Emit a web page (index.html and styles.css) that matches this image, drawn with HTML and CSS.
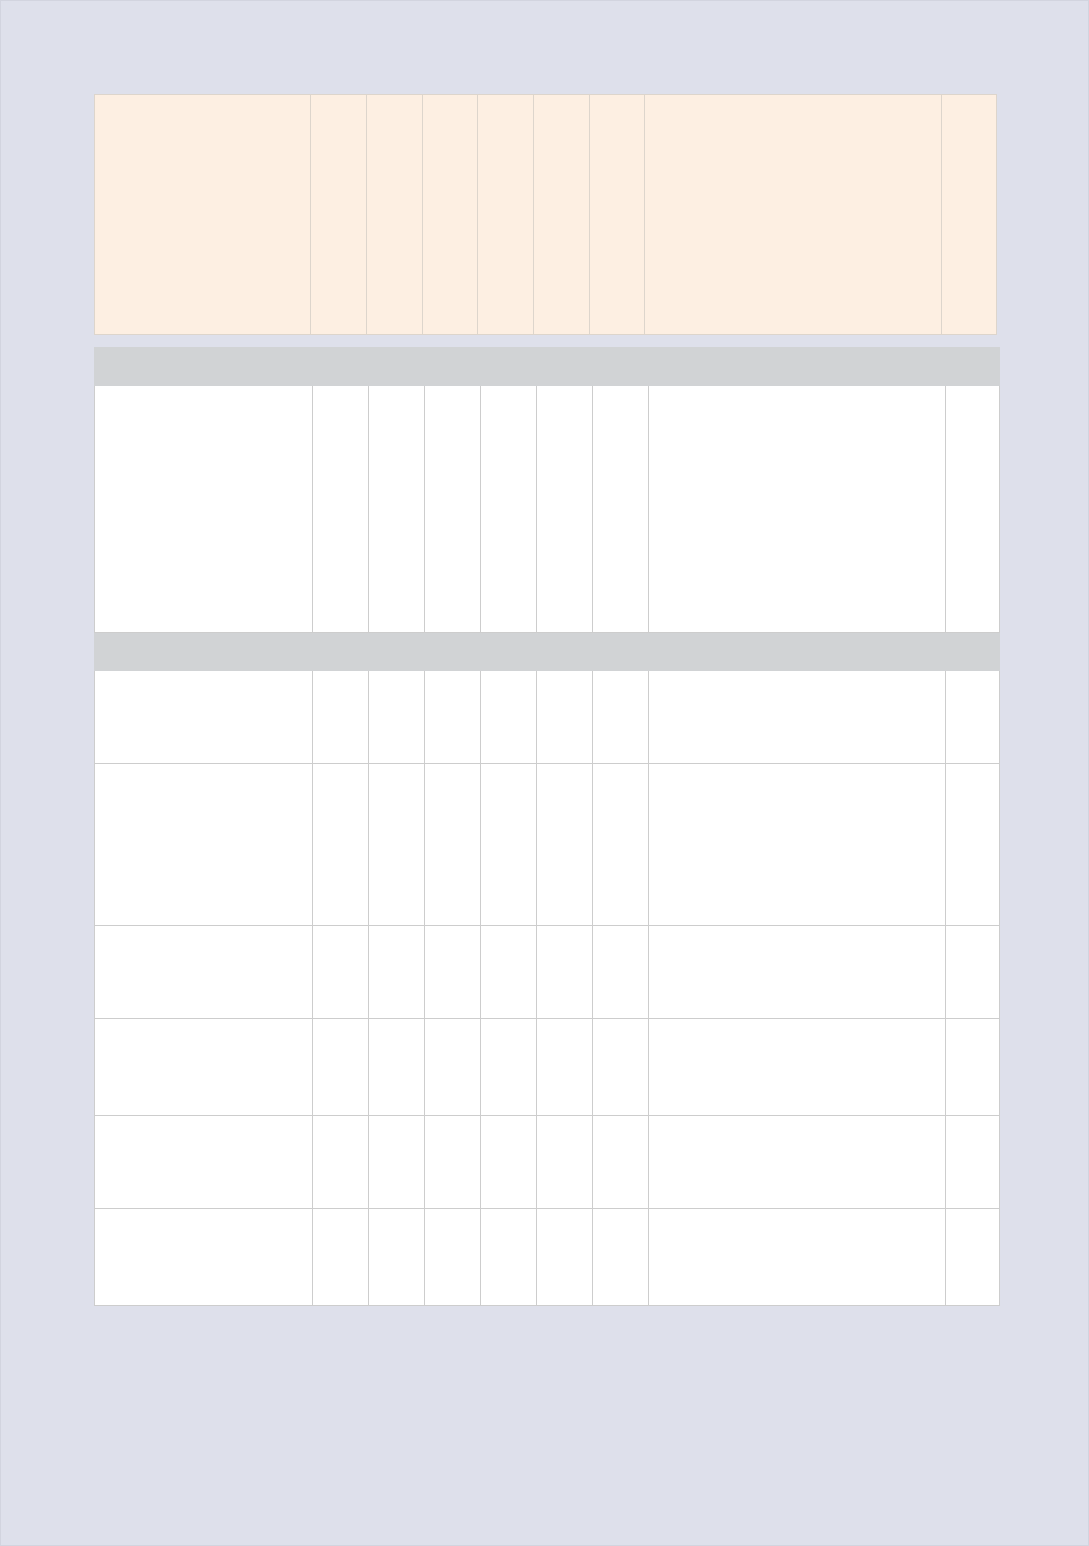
FILE: index.html
```html
<!DOCTYPE html>
<html lang="en">
<head>
<meta charset="utf-8">
<title>Table</title>
<link rel="stylesheet" href="styles.css">
</head>
<body>
<div class="page">
  <table class="head-table">
    <colgroup>
      <col class="c-first-h"><col class="c-s"><col class="c-s"><col class="c-s5"><col class="c-s"><col class="c-s"><col class="c-s5"><col class="c-wide"><col class="c-s5">
    </colgroup>
    <tr class="head-row">
      <th></th><th></th><th></th><th></th><th></th><th></th><th></th><th></th><th></th>
    </tr>
  </table>

  <table class="body-table">
    <colgroup>
      <col class="c-first"><col class="c-s"><col class="c-s"><col class="c-s"><col class="c-s"><col class="c-s"><col class="c-s"><col class="c-wide"><col class="c-last">
    </colgroup>
    <tr class="section"><td colspan="9"></td></tr>
    <tr class="r247"><td></td><td></td><td></td><td></td><td></td><td></td><td></td><td></td><td></td></tr>
    <tr class="section"><td colspan="9"></td></tr>
    <tr class="r93"><td></td><td></td><td></td><td></td><td></td><td></td><td></td><td></td><td></td></tr>
    <tr class="r162"><td></td><td></td><td></td><td></td><td></td><td></td><td></td><td></td><td></td></tr>
    <tr class="r93"><td></td><td></td><td></td><td></td><td></td><td></td><td></td><td></td><td></td></tr>
    <tr class="r97"><td></td><td></td><td></td><td></td><td></td><td></td><td></td><td></td><td></td></tr>
    <tr class="r93"><td></td><td></td><td></td><td></td><td></td><td></td><td></td><td></td><td></td></tr>
    <tr class="r97"><td></td><td></td><td></td><td></td><td></td><td></td><td></td><td></td><td></td></tr>
  </table>
</div>
</body>
</html>
```

FILE: styles.css
```css
html, body {
  margin: 0;
  padding: 0;
}
body {
  background: #dee0eb;
  font-family: "Liberation Sans", Arial, sans-serif;
}
.page {
  box-sizing: border-box;
  width: 1089px;
  height: 1546px;
  border: 1px solid #d2d4df;
  padding: 93px 0 0 93px;
}
table {
  border-collapse: collapse;
  table-layout: fixed;
}
.head-table {
  width: 902px;
}
.head-table th {
  background: #fdefe2;
  border: 1px solid #ddd5cc;
  padding: 0;
}
.head-row {
  height: 240px;
}
.c-first-h { width: 216px; }
.c-s { width: 56px; }
.c-s5 { width: 55px; }
.c-wide { width: 297px; }
.c-first { width: 218px; }
.c-last { width: 54px; }

.body-table {
  width: 906px;
  margin-top: 12px;
}
.body-table td {
  background: #ffffff;
  border: 1px solid #cdcdcd;
  padding: 0;
}
.body-table .section td {
  background: #d1d3d5;
  border-color: #d1d3d5;
}
.section { height: 38px; }
.r247 { height: 247px; }
.r93 { height: 93px; }
.r97 { height: 97px; }
.r162 { height: 162px; }
```
